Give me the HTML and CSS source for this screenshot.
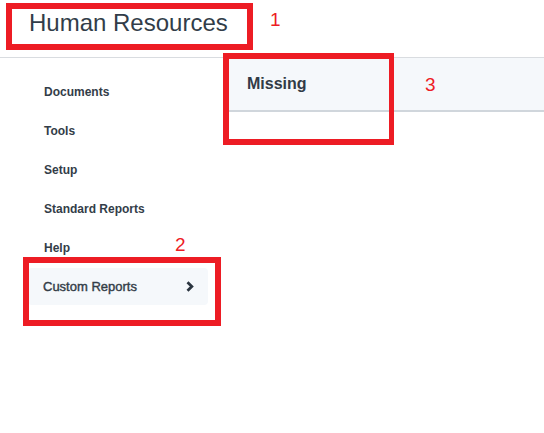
FILE: index.html
```html
<!DOCTYPE html>
<html>
<head>
<meta charset="utf-8">
<link rel="stylesheet" href="styles.css">
</head>
<body>
<div class="page">
  <header class="header">
    <h1 class="title">Human Resources</h1>
  </header>
  <div class="body">
    <nav class="sidebar">
      <div class="item">Documents</div>
      <div class="item">Tools</div>
      <div class="item">Setup</div>
      <div class="item">Standard Reports</div>
      <div class="item">Help</div>
      <div class="item active">
        <span>Custom Reports</span>
        <svg class="chev" width="8" height="11" viewBox="0 0 8 11"><path d="M1.5 1.3 L5.8 5.5 L1.5 9.7" fill="none" stroke="#2b3540" stroke-width="2.8"/></svg>
      </div>
    </nav>
    <main class="main">
      <div class="panel-head">Missing</div>
    </main>
  </div>

  <div class="mark box1"></div>
  <div class="mark box2"></div>
  <div class="mark box3"></div>
  <div class="num n1">1</div>
  <div class="num n2">2</div>
  <div class="num n3">3</div>
</div>
</body>
</html>
```

FILE: styles.css
```css
html, body {
  margin: 0;
  padding: 0;
  background: #ffffff;
}
.page {
  position: relative;
  width: 544px;
  height: 433px;
  overflow: hidden;
  font-family: "Liberation Sans", Arial, sans-serif;
  color: #333d48;
}
.header {
  height: 48px;
  padding: 9px 0 0 29px;
  border-bottom: 1px solid #d9dce0;
}
.title {
  margin: 0;
  font-size: 24px;
  line-height: 28px;
  font-weight: normal;
  color: #323d49;
}
.body {
  display: flex;
}
.sidebar {
  width: 223px;
  padding-top: 14px;
  display: flex;
  flex-direction: column;
}
.item {
  height: 39px;
  display: flex;
  align-items: center;
  padding-left: 44px;
  font-size: 12px;
  font-weight: bold;
  color: #333d48;
}
.item.active {
  margin: 1px 0 1px 28px;
  height: 37px;
  width: 180px;
  box-sizing: border-box;
  padding: 0 14px 0 15px;
  justify-content: space-between;
  background: #f5f8fb;
  border-radius: 4px;
  font-size: 13px;
  font-weight: normal;
  -webkit-text-stroke: 0.4px #333d48;
}
.chev {
  display: block;
}
.main {
  flex: 1;
}
.panel-head {
  height: 52px;
  line-height: 52px;
  padding-left: 24px;
  background: #f5f8fb;
  border-bottom: 2px solid #d0d6dc;
  font-size: 16px;
  font-weight: bold;
  color: #313b46;
}
.mark {
  position: absolute;
  box-sizing: border-box;
  border: 6px solid #ed1c24;
}
.box1 { left: 6px; top: 3px; width: 247px; height: 47px; }
.box2 { left: 23px; top: 257px; width: 198px; height: 69px; }
.box3 { left: 223px; top: 53px; width: 171px; height: 92px; border-right-width: 5px; }
.num {
  position: absolute;
  font-size: 19px;
  line-height: 19px;
  color: #ed1c24;
}
.n1 { left: 270px; top: 10px; }
.n2 { left: 175px; top: 235px; }
.n3 { left: 425px; top: 75px; }
```
